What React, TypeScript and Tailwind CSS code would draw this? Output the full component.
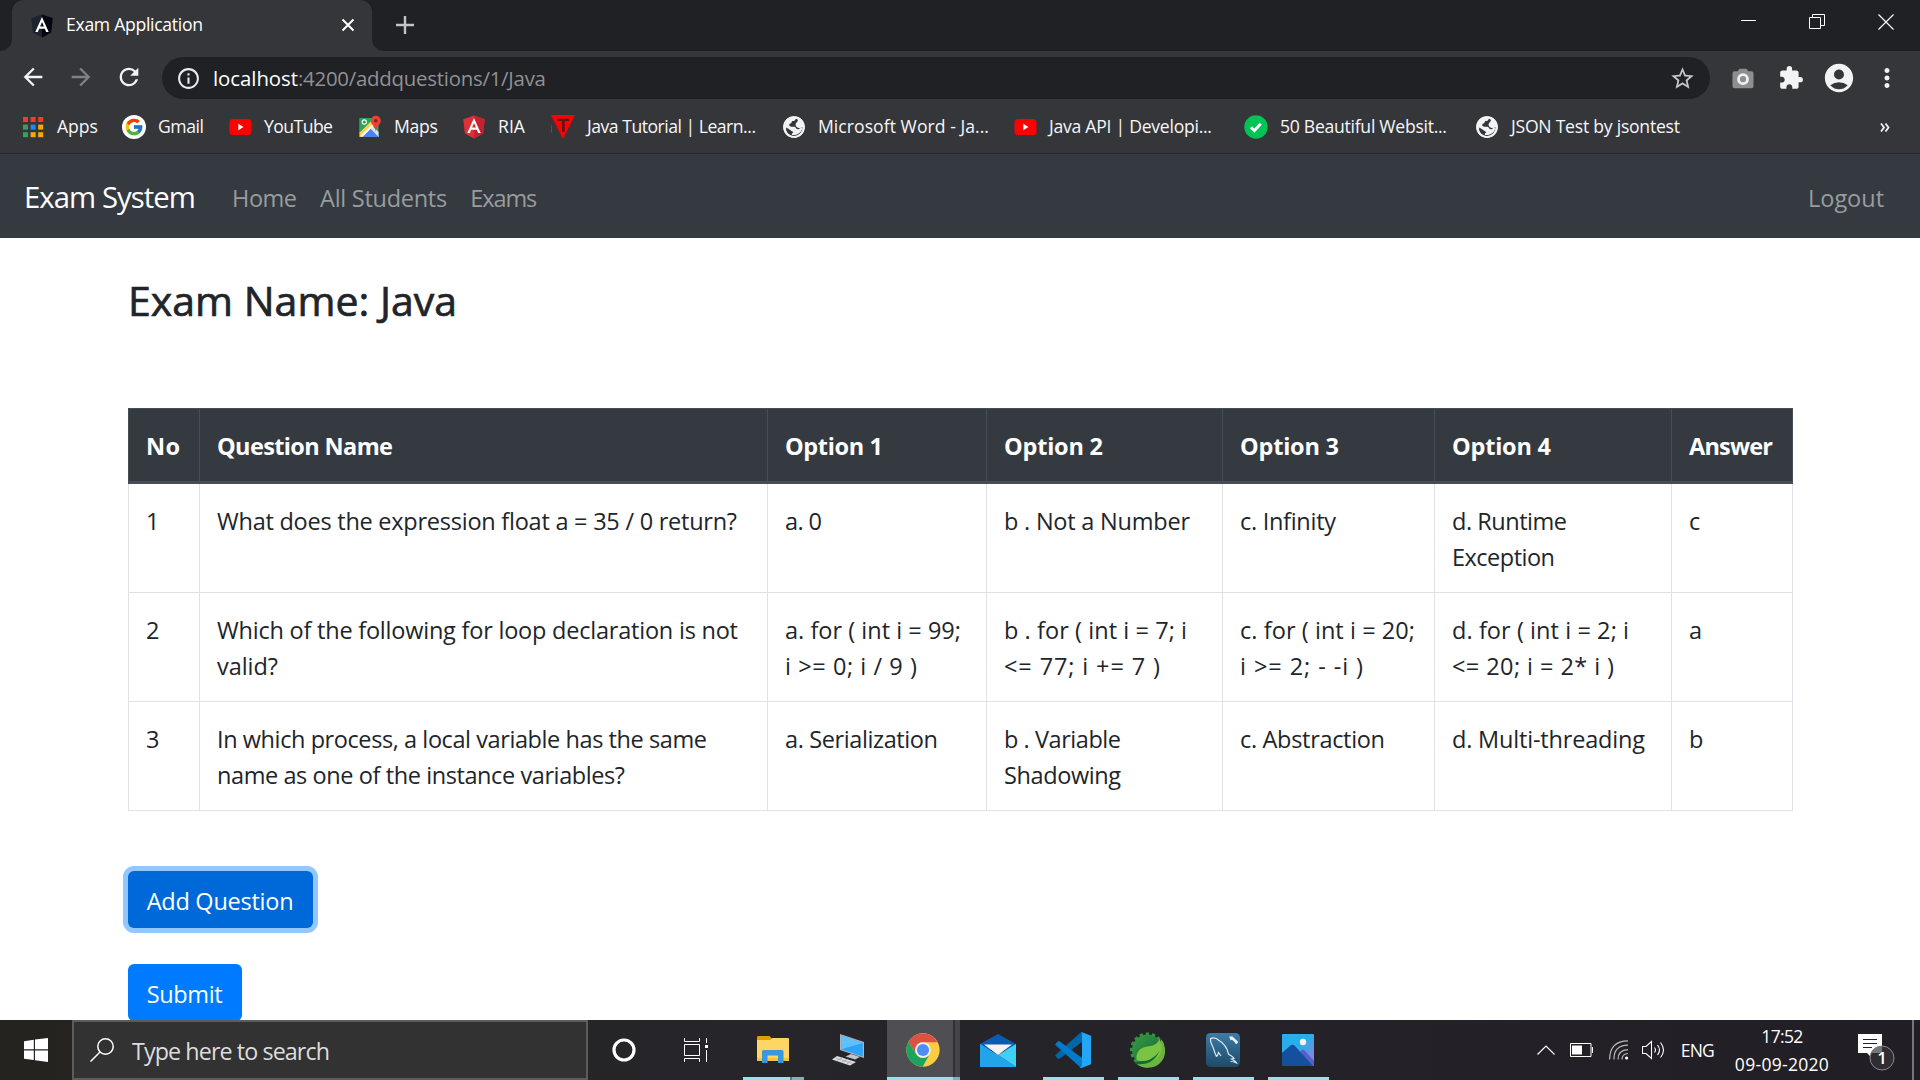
import { useLayoutEffect, useRef } from 'react';
import type { ReactNode } from 'react';
import { FcGoogle } from 'react-icons/fc';
import {
  MdArrowBack,
  MdArrowForward,
  MdRefresh,
  MdInfoOutline,
  MdStarBorder,
  MdExtension,
  MdAccountCircle,
  MdMoreVert,
} from 'react-icons/md';

/** One line of text whose tracking is adjusted so that it fills `w` pixels. */
function T({ w, children, className = '' }: { w: number; children: string; className?: string }) {
  const ref = useRef<HTMLSpanElement>(null);
  useLayoutEffect(() => {
    const el = ref.current;
    if (!el) return;
    el.style.letterSpacing = '0px';
    const natural = el.getBoundingClientRect().width;
    el.style.letterSpacing = `${(w - natural) / Math.max(1, children.length - 1)}px`;
  }, [w, children]);
  return (
    <span ref={ref} className={`inline-block whitespace-pre ${className}`}>
      {children}
    </span>
  );
}

/* ---------- small logos ---------- */

function Angular({ left, right, className }: { left: string; right: string; className: string }) {
  return (
    <svg viewBox="28 26 194 208" className={className}>
      <path fill={left} d="M125 30 31.9 63.2l14.2 123.1L125 230l78.9-43.7 14.2-123.1z" />
      <path fill={right} d="M125 30v200l78.9-43.7 14.2-123.1z" />
      <path
        fill="#fff"
        d="M125 52.1 66.8 182.6h21.7l11.7-29.2h49.4l11.7 29.2H183L125 52.1zm17 83.3h-34l17-40.9 17 40.9z"
      />
    </svg>
  );
}

function AppsGrid() {
  const rows = [
    ['#f23a2f', '#f23a2f', '#f23a2f'],
    ['#34a35a', '#1e88f5', '#fba60a'],
    ['#34a35a', '#fba60a', '#fba60a'],
  ];
  return (
    <svg viewBox="0 0 24 24" className="h-6 w-6">
      {rows.map((r, y) =>
        r.map((c, x) => <rect key={`${x}${y}`} x={2 + x * 7.6} y={2 + y * 7.6} width="5" height="5" fill={c} />),
      )}
    </svg>
  );
}

function Gmail() {
  return (
    <span className="flex h-6 w-6 items-center justify-center rounded-full bg-white">
      <FcGoogle className="h-5 w-5" />
    </span>
  );
}

function YouTube() {
  return (
    <svg viewBox="0 0 24 24" className="h-6 w-6">
      <rect x="1.500" y="4" width="22" height="16" rx="3.6" fill="#f00" />
      <path d="M10.300 8.800v6.400l5.200-3.200z" fill="#fff" />
    </svg>
  );
}

function Maps() {
  return (
    <svg viewBox="0 0 24 24" className="h-6 w-6">
      <rect x="1.5" y="3" width="19" height="19" rx="1.5" fill="#2fa35a" />
      <path d="M2 22 12 12l9 9v1z" fill="#4a84f0" />
      <path d="M1.5 17.5 16 3l4.5 1v3L4 22H1.5z" fill="#fbd24a" />
      <path d="M1.500 3h14.500L1.500 17.500z" fill="#2fa35a" />
      <path d="M14 10.500 20.500 17v5L12 13z" fill="#dde3ea" />
      <path d="M4.500 22 12.200 14l8 8z" fill="#4a84f0" />
      <path d="M2.500 20.500 14 9.500l1.500 1.500L4.500 22z" fill="#f4f6f8" />
      <circle cx="6.300" cy="7" r="2.100" fill="none" stroke="#fff" strokeWidth="1.100" />
      <path d="M17.800.8a5 5 0 0 0-5 5c0 3.700 4.100 5 5 10.800.9-5.800 5-7.100 5-10.800a5 5 0 0 0-5-5z" fill="#ea4335" />
      <circle cx="17.800" cy="5.800" r="1.800" fill="#8f2018" />
    </svg>
  );
}

function RedTriangle() {
  return (
    <svg viewBox="0 0 24 24" className="h-6 w-6">
      <path d="M0 0h24L12 24z" fill="#f00" />
      <path d="M6.500 3.800h11.500v2.200h-4.300v11h-2.600V6H6.500z" fill="#5b1417" />
      <path d="M.3 10.500v7" stroke="#6a6b6e" strokeWidth=".7" />
    </svg>
  );
}

function Globe() {
  return (
    <svg viewBox="0 0 24 24" className="h-6 w-6">
      <circle cx="12" cy="12" r="10.700" fill="#f1f3f4" />
      <path
        d="M14.200 3.400c-1 1.700-1.600 2.600-3.800 2.600-1 .2-.4 2-1.900 2.600-1.300.4-1.500 1.200-1.100 2.200 1 1.500 4.200.6 5.700 1.100 1.200.9 1 2.200 2.900 2.300 1.700.1 1.500 1.600.6 2.400-1.400 1-1.800 2.700-3.600 3.400-1.100.4-1.400-.4-1.300-1.700 0-1.600-1.500-1.900-2.500-2.600-1.500-1.200-3.300-2.400-5-3.300-.9 4.400 2.800 8.400 7 8.900 5.700.5 9.600-4.400 9.300-9.300-1.200 1.300-3.400 1.400-5 .6-1.700-.9-2.600-2.900-1.400-4.500 1-1.200 2.100-1.900 1.700-3.400z"
        fill="#35363a"
      />
      <circle cx="12" cy="12" r="9.900" fill="none" stroke="#f1f3f4" strokeWidth="1.800" />
      <path d="M9.800 19.900c-.3-1.700 1.200-2.300 2.700-3.100 1-1 1.800-2.100 3.400-2 1.600-.4 1.700-2.200 4.400-2-.3 3.500-3.600 8.100-10.500 7.100z" fill="#f1f3f4" />
    </svg>
  );
}

function GreenCheck() {
  return (
    <svg viewBox="0 0 24 24" className="h-6 w-6">
      <circle cx="12" cy="12" r="11.700" fill="#02c353" />
      <path d="m7 12.300 3.400 3.500 6.300-7.100" fill="none" stroke="#fff" strokeWidth="2.800" />
    </svg>
  );
}

/* ---------- browser chrome ---------- */

function TabStrip() {
  return (
    <div className="flex h-[51px] bg-[#202124]">
      <div className="flex w-3 items-end bg-[#35363a]">
        <div className="h-full w-3 rounded-br-xl bg-[#202124]" />
      </div>
      <div className="flex w-[360px] items-center rounded-t-xl bg-[#35363a] pl-[18px] text-[17.6px] text-white">
        <Angular left="#1d2230" right="#04060f" className="h-6 w-6" />
        <T w={137} className="mb-[3px] ml-3 leading-[48px]">Exam Application</T>
        <svg viewBox="0 0 14 14" className="mb-px ml-auto mr-[17px] h-3.5 w-3.5">
          <path d="m1.500 1.500 11 11m0-11-11 11" stroke="#fff" strokeWidth="2" />
        </svg>
      </div>
      <div className="w-3 bg-[#35363a]">
        <div className="h-full w-3 rounded-bl-xl bg-[#202124]" />
      </div>
      <svg viewBox="0 0 18 18" className="ml-3 mt-4 h-[18px] w-[18px]">
        <path d="M9 0v18M0 9h18" stroke="#c3c4c7" strokeWidth="2.400" />
      </svg>
      <div className="ml-auto mr-[26px] mt-[14px] flex h-4 gap-[53px]">
        <svg viewBox="0 0 16 16" className="h-4 w-4">
          <path d="M1 6.500h15" stroke="#fff" />
        </svg>
        <svg viewBox="0 0 16 16" className="h-4 w-4">
          <path d="M.5 3.500h11v11H.5zM3.500 3V.5h12v11h-3.500" fill="none" stroke="#fff" />
        </svg>
        <svg viewBox="0 0 16 16" className="h-4 w-4">
          <path d="m.5.500 15 15m0-15-15 15" stroke="#fff" strokeWidth="1.200" />
        </svg>
      </div>
    </div>
  );
}

function Camera() {
  return (
    <svg viewBox="0 0 24 24" className="h-6 w-6">
      <path
        d="M3.500 5.200h3.200l1.700-2.400h7.200l1.700 2.400h3.200a2 2 0 0 1 2 2v13a2 2 0 0 1-2 2h-17a2 2 0 0 1-2-2v-13a2 2 0 0 1 2-2z"
        fill="#8d8e90"
      />
      <circle cx="12" cy="13.200" r="4.500" fill="#8d8e90" stroke="#f0f0f0" strokeWidth="2.800" />
    </svg>
  );
}

function Toolbar() {
  return (
    <div className="flex h-[51px] items-center bg-[#35363a] pl-[19px]">
      <MdArrowBack className="h-7 w-7 text-[#f1f3f4]" />
      <MdArrowForward className="ml-5 h-7 w-7 text-[#808184]" />
      <MdRefresh className="ml-5 h-7 w-7 text-[#f1f3f4]" />
      <div className="ml-[19px] mt-[3px] flex h-[42px] w-[1548px] items-center rounded-full bg-[#202124] pl-[14px] pr-[14px] text-[20.4px]">
        <MdInfoOutline className="h-[25px] w-[25px] text-[#e8eaed]" />
        <T w={85} className="ml-3 leading-[40px] text-white">localhost</T>
        <T w={248} className="leading-[40px] text-[#909194]">:4200/addquestions/1/Java</T>
        <MdStarBorder className="ml-auto h-[27px] w-[27px] text-[#c5c6c8]" />
      </div>
      <div className="ml-[21px] mt-[3px] flex items-center">
        <Camera />
        <MdExtension className="ml-[23px] h-[26px] w-[26px] text-[#f1f3f4]" />
        <MdAccountCircle className="ml-[18px] h-[34px] w-[34px] text-[#f1f3f4]" />
        <MdMoreVert className="ml-[16px] h-[30px] w-[30px] text-[#f1f3f4]" />
      </div>
    </div>
  );
}

const bookmarks: { icon: ReactNode; label: string; w: number; cell: string }[] = [
  { icon: <AppsGrid />, label: 'Apps', w: 41, cell: 'w-[101px]' },
  { icon: <Gmail />, label: 'Gmail', w: 46, cell: 'w-[106px]' },
  { icon: <YouTube />, label: 'YouTube', w: 69, cell: 'w-[130px]' },
  { icon: <Maps />, label: 'Maps', w: 44, cell: 'w-[104px]' },
  {
    icon: <Angular left="#dd3136" right="#c3222e" className="h-6 w-6" />,
    label: 'RIA',
    w: 27,
    cell: 'w-[89px]',
  },
  { icon: <RedTriangle />, label: 'Java Tutorial | Learn...', w: 169, cell: 'w-[231px]' },
  { icon: <Globe />, label: 'Microsoft Word - Ja...', w: 171, cell: 'w-[231px]' },
  { icon: <YouTube />, label: 'Java API | Developi...', w: 163, cell: 'w-[231px]' },
  { icon: <GreenCheck />, label: '50 Beautiful Websit...', w: 167, cell: 'w-[231px]' },
  { icon: <Globe />, label: 'JSON Test by jsontest', w: 169, cell: 'w-[231px]' },
];

function Bookmarks() {
  return (
    <div className="flex h-[52px] items-center border-b border-[#26282c] bg-[#35363a] pb-px pl-[21px] text-[17.600px] text-[#f6f7f8]">
      {bookmarks.map((b) => (
        <div key={b.label} className={`flex shrink-0 items-center ${b.cell}`}>
          {b.icon}
          <T w={b.w} className="mb-[3px] ml-3 leading-6">{b.label}</T>
        </div>
      ))}
      <svg viewBox="0 0 10 9" className="ml-auto mr-[30px] h-[9px] w-2.5">
        <path d="m1 .5 3 4-3 4m4.500-8 3 4-3 4" fill="none" stroke="#f1f3f4" strokeWidth="1.800" />
      </svg>
    </div>
  );
}

/* ---------- exam page ---------- */

function Navbar() {
  return (
    <nav className="flex h-[84px] items-center bg-[#343a40] px-6 pt-[5px] text-[23.500px] text-[#999c9f]">
      <T w={172} className="mb-[3px] text-[29.300px] leading-[45px] text-white">Exam System</T>
      <T w={65} className="ml-[37px]">Home</T>
      <T w={127} className="ml-[23.500px]">All Students</T>
      <T w={67} className="ml-[23.500px]">Exams</T>
      <T w={76} className="ml-auto mr-3">Logout</T>
    </nav>
  );
}

type Line = [string, number];

const columns: { title: Line; width: string }[] = [
  { title: ['No', 34], width: 'w-[71px]' },
  { title: ['Question Name', 176], width: 'w-[568px]' },
  { title: ['Option 1', 98], width: 'w-[219px]' },
  { title: ['Option 2', 99], width: 'w-[236px]' },
  { title: ['Option 3', 99], width: 'w-[212px]' },
  { title: ['Option 4', 99], width: 'w-[237px]' },
  { title: ['Answer', 84], width: 'w-[121px]' },
];

const questions: Line[][][] = [
  [
    [['1', 12]],
    [['What does the expression float a = 35 / 0 return?', 520]],
    [['a. 0', 37]],
    [['b . Not a Number', 186]],
    [['c. Infinity', 96]],
    [['d. Runtime', 115], ['Exception', 103]],
    [['c', 11]],
  ],
  [
    [['2', 12]],
    [['Which of the following for loop declaration is not', 521], ['valid?', 61]],
    [['a. for ( int i = 99;', 176], ['i >= 0; i / 9 )', 132]],
    [['b . for ( int i = 7; i', 183], ['<= 77; i += 7 )', 156]],
    [['c. for ( int i = 20;', 175], ['i >= 2; - -i )', 123]],
    [['d. for ( int i = 2; i', 177], ['<= 20; i = 2* i )', 162]],
    [['a', 12]],
  ],
  [
    [['3', 12]],
    [['In which process, a local variable has the same', 490], ['name as one of the instance variables?', 408]],
    [['a. Serialization', 153]],
    [['b . Variable', 117], ['Shadowing', 117]],
    [['c. Abstraction', 145]],
    [['d. Multi-threading', 193]],
    [['b', 13]],
  ],
];

function QuestionTable() {
  return (
    <table className="w-[1665px] table-fixed border-collapse text-left align-top text-[23.500px] leading-9">
      <thead>
        <tr className="h-[74px] bg-[#343a40] text-white">
          {columns.map((c) => (
            <th
              key={c.title[0]}
              className={`border border-b-[3px] border-[#454d55] px-[17px] pt-[1px] font-bold ${c.width}`}
            >
              <T w={c.title[1]} className="align-top">{c.title[0]}</T>
            </th>
          ))}
        </tr>
      </thead>
      <tbody>
        {questions.map((row) => (
          <tr key={row[0][0][0]} className="h-[109px] first:h-[110px]">
            {row.map((lines, i) => (
              <td key={i} className="border border-[#dee2e6] px-[17px] pt-[19px] align-top">
                {lines.map(([text, w]) => (
                  <div key={text} className="h-9">
                    <T w={w} className="align-top">{text}</T>
                  </div>
                ))}
              </td>
            ))}
          </tr>
        ))}
      </tbody>
    </table>
  );
}

function ExamPage() {
  return (
    <main className="h-[782px] overflow-hidden bg-white pl-32 pt-[35px] text-[#212529]">
      <h2 className="h-[135px] text-[41px] font-medium leading-[54px] [-webkit-text-stroke:0.7px_#212529]">
        <T w={329}>Exam Name: Java</T>
      </h2>
      <QuestionTable />
      <div className="mt-[60px] flex flex-col items-start gap-9 text-[23.500px] leading-[57px] text-white">
        <button className="h-[57px] w-[185px] rounded-[6px] bg-[#0069d9] pr-px pt-[2px] shadow-[0_0_0_5px_#93c7ff]">
          <T w={147} className="align-top">Add Question</T>
        </button>
        <button className="h-[57px] w-[114px] rounded-[6px] bg-[#007bff] pr-px pt-[2px]">
          <T w={76} className="align-top">Submit</T>
        </button>
      </div>
    </main>
  );
}

/* ---------- taskbar ---------- */

function TaskView() {
  return (
    <svg viewBox="0 0 25 24" className="h-6 w-[25px]">
      <path
        d="M.5 0v3.500h15V0M.5 24v-3.500h15V24M.5 6.500h15v11H.5zM22.500 0v5m0 7v12"
        fill="none"
        stroke="#fff"
      />
      <rect x="21" y="7" width="3" height="3" fill="#fff" />
    </svg>
  );
}

function Explorer() {
  return (
    <svg viewBox="0 0 32 27" className="mr-0.5 mt-0.5 h-[27px] w-8">
      <path d="M0 1.200Q0 0 1.200 0H12.500L15 2.500V6H0z" fill="#e09c06" />
      <path d="M0 4h13l2.500-2H31q1 0 1 1v22H0z" fill="#ffd563" />
      <path d="M0 22h32v3H0z" fill="#f6bf45" />
      <path d="M5 15.500Q5 14 6.500 14h18.500q1.500 0 1.500 1.500V27h-5.500v-7.500H10.500V27H5z" fill="#3a96dd" />
    </svg>
  );
}

function RemotePc() {
  return (
    <svg viewBox="0 0 32 32" className="mr-0.5 h-8 w-8">
      <path d="m8 0 24 8v16L8 16z" fill="#a9b4bd" />
      <path d="m9.200 1.600 21.600 7.300v13.500L9.200 15.200z" fill="#2ba4f8" />
      <path d="m9.200 1.600 21.600 7.300-21.600 6.300z" fill="#62bfff" />
      <path d="m19 20 9 3-5 2.500-9.500-3z" fill="#bfc6cc" />
      <path d="m5 22 19 6-6 3.500-18-6z" fill="#dde1e5" />
      <path d="m3.500 24 17 5.500m-10-6-6 3.500m11-2-6 3.500m10-2-5 3.500" stroke="#9fa6ad" strokeWidth=".8" />
    </svg>
  );
}

function Chrome() {
  return (
    <svg viewBox="0 0 48 48" className="ml-[6px] h-[34px] w-[34px]">
      <circle cx="24" cy="24" r="23.500" fill="#fbcd42" />
      <path d="M3.600 12.300A23.500 23.500 0 0 1 44.500 13H24a11 11 0 0 0-9.600 16.500z" fill="#dd5144" />
      <path d="M3.600 12.300A23.500 23.500 0 0 0 23.500 47.500L33.500 29.500A11 11 0 0 1 14.400 29.500z" fill="#1ca261" />
      <circle cx="24" cy="24" r="11" fill="#f1f1f1" />
      <circle cx="24" cy="24" r="8.600" fill="#4f8df6" />
    </svg>
  );
}

function Mail() {
  return (
    <svg viewBox="0 0 36 33" className="mr-0.5 h-[33px] w-9">
      <path d="M0 10 18 0l18 10v6H0z" fill="#0a5cb0" />
      <path d="M0 10v23h36z" fill="#1f9ee8" />
      <path d="M36 10v23L18 21z" fill="#3fd1f5" />
      <path d="M18 21 36 33H0V10z" fill="#22a4ea" />
      <path d="M4 10.500h28L18 21z" fill="#f3f3f3" />
    </svg>
  );
}

function VsCode() {
  return (
    <svg viewBox="0 0 36 36" className="mr-0.5 h-9 w-9">
      <path d="m.6 24.200 2 2.200q1 1 2.200.1L27 10V0q-1 0-2 1L.7 22.700q-.8.800-.1 1.500z" fill="#0065a9" />
      <path d="m.6 11.800 2-2.200q1-1 2.200-.1L27 26v10q-1 0-2-1L.7 13.300q-.8-.8-.1-1.500z" fill="#007acc" />
      <path d="M26.500 0 36 3.800v28.400L26.500 36q-1 0-2-.8l2.500-1V2z" fill="#23a6f5" />
    </svg>
  );
}

function Spring() {
  return (
    <svg viewBox="0 0 36 36" className="mr-0.5 h-9 w-9">
      <defs>
        <linearGradient id="gear" x1="0" y1="0" x2="1" y2="1">
          <stop offset="0" stopColor="#3a9c45" />
          <stop offset=".6" stopColor="#1d7a3a" />
        </linearGradient>
      </defs>
      <circle cx="17.500" cy="18" r="15.500" fill="url(#gear)" />
      <circle cx="17.500" cy="18" r="16" fill="none" stroke="#33913f" strokeWidth="3" strokeDasharray="3.300 2.800" />
      <path d="M31 7c6 8 5.500 19-2 25-7 5.500-18 5-23.500-1C17 32 29 28 31 7z" fill="#6db33f" />
      <path
        d="M6.500 28C5.500 17 13 14.800 20 14c5-.5 8-3.500 9.800-7 2.700 8 2.200 13.500-1 17.500-3 3.500-7 4.500-11.800 4.300-4-.2-7.500 1.200-10.500-.8z"
        fill="#7cc344"
      />
      <path d="M5 29.800c10 1.200 19-2.800 24.500-10.800-4 10-13 14.500-24 13z" fill="#0d6b36" />
    </svg>
  );
}

function MySql() {
  return (
    <svg viewBox="0 0 34 34" className="mr-0.5 h-[34px] w-[34px]">
      <defs>
        <linearGradient id="mysql" x1="0" y1="0" x2="0" y2="1">
          <stop offset="0" stopColor="#3e7ba6" />
          <stop offset="1" stopColor="#1e4a68" />
        </linearGradient>
      </defs>
      <rect width="34" height="34" rx="4.500" fill="url(#mysql)" />
      <path
        d="M10.500 23.500c-1.500-3-2-4.500-3-8-.8-3.500-3.500-5-3-10C8 4 11 5.500 13 7.500c5.500 3 8 7 9.500 13.500 1.500 1.500 4.500 2.500 5.500 4.500l-2.500.5c2 1 4 2 5 4-2-1-4-1.500-6-1.500M10.500 23.500c1.500-1 1.500-3 2-4l2.500 3.500"
        fill="none"
        stroke="#dce9f2"
        strokeWidth="1.200"
      />
      <path d="m25 4 6 5.500" stroke="#e8f1f6" strokeWidth="2.600" />
      <path d="M24 3.500 25 6l2-1.500M29.500 10.500l2-2" stroke="#e8f1f6" strokeWidth="1.800" fill="none" />
    </svg>
  );
}

function Photos() {
  return (
    <svg viewBox="0 0 32 32" className="mr-0.5 h-8 w-8">
      <defs>
        <linearGradient id="sky" x1="0" y1="0" x2="1" y2="1">
          <stop offset=".45" stopColor="#28aeea" />
          <stop offset="1" stopColor="#a876dc" />
        </linearGradient>
      </defs>
      <rect width="32" height="32" rx="1" fill="url(#sky)" />
      <path d="m14 23 5-6q2-3 4 0l9 10v5H14z" fill="#5560c8" />
      <path d="M0 19 8.500 11.500q2-1.500 4 0L31 32H0z" fill="#14509b" />
      <circle cx="21" cy="8" r="3.200" fill="#f8f3ec" />
    </svg>
  );
}

function TaskButton({ children, active, open }: { children: ReactNode; active?: boolean; open?: boolean }) {
  return (
    <div className={`flex h-[60px] flex-col ${active ? 'w-[66px] bg-[#4f4e53]' : 'w-[61px]'}`}>
      <div className="flex h-[57px] items-center justify-center pt-[3px]">{children}</div>
      {open && <div className="h-[3px] w-full bg-[#90e5ec]" />}
    </div>
  );
}

function Tray() {
  return (
    <div className="ml-auto flex h-[60px] items-center text-[17.500px] text-white">
      <svg viewBox="0 0 18 10" className="h-2.5 w-[18px]">
        <path d="m.5 9.500 8.500-8.500 8.500 8.500" fill="none" stroke="#fff" strokeWidth="1.200" />
      </svg>
      <svg viewBox="0 0 24 14" className="ml-[15px] h-[14px] w-6">
        <path d="M.5.500h20.500v13H.5zM22.500 4v6" fill="none" stroke="#fff" />
        <rect x="2" y="2.500" width="10" height="9" fill="#fff" />
      </svg>
      <svg viewBox="0 0 20 20" className="ml-[15px] h-5 w-5">
        <path d="M.6 19.500Q.6 1 19 .8M5 19.500Q4.500 5.500 19 5.200M9 19.500Q9 10 19 9.600M13 19.500Q13 14 19 13.500" fill="none" stroke="#b7b7b7" strokeWidth="1.200" />
        <circle cx="17.600" cy="18" r="1.600" fill="#fff" />
      </svg>
      <svg viewBox="0 0 23 20" className="ml-[13px] h-5 w-[23px]">
        <path
          d="M.5 6.500h3.500L9.500 1.500v17L4 13.500H.5zM12.500 7.500q2 2.500 0 5M15.500 5q4 5 0 10M18.500 2.500q6 7.500 0 15"
          fill="none"
          stroke="#fff"
          strokeWidth="1.100"
        />
      </svg>
      <T w={34} className="ml-4">ENG</T>
      <div className="ml-[21px] flex w-[94px] flex-col items-center leading-[28px]">
        <T w={42}>17:52</T>
        <T w={94}>09-09-2020</T>
      </div>
      <svg viewBox="0 0 38 38" className="ml-[29px] mt-1.5 h-[38px] w-[38px]">
        <path d="M0 0h24v19H14v5l-5-5H0z" fill="#fff" />
        <path d="M5 5.500h14M5 9.500h14M5 13.500h9" stroke="#232126" />
        <circle cx="24" cy="24" r="12" fill="#2e2d31" stroke="#8a898d" />
        <path d="M13 19a12 12 0 0 1 11-7v7z" fill="#77767a" />
        <text x="24" y="30" fill="#fff" fontSize="17" fontWeight="600" textAnchor="middle">
          1
        </text>
      </svg>
      <div className="ml-[16px] mr-[6px] h-[60px] w-[2px] bg-[#77757a]" />
    </div>
  );
}

function Taskbar() {
  return (
    <div className="flex h-[60px] items-center bg-linear-to-r from-[#24231f] via-[#26252a] via-40% to-[#211f25]">
      <div className="flex w-[72px] justify-center">
        <svg viewBox="0 0 24 24" className="h-6 w-6">
          <path d="M0 3.200 9.800 1.800V11.300H0zM11 1.600 24 0v11.300H11zM0 12.600h9.800v9.500L0 20.800zM11 12.600h13V24l-13-1.700z" fill="#fff" />
        </svg>
      </div>
      <div className="flex h-[60px] w-[516px] items-center border-2 border-[#5c5c5c] bg-[#323232] pl-4 text-[23.300px] text-[#dcdcdc]">
        <svg viewBox="0 0 24 24" className="h-6 w-6">
          <circle cx="15.500" cy="8.500" r="7.700" fill="none" stroke="#fff" strokeWidth="1.500" />
          <path d="m10 14-9.500 9.500" stroke="#fff" strokeWidth="1.500" />
        </svg>
        <T w={198} className="ml-[18px] mt-[3px]">Type here to search</T>
      </div>
      <svg viewBox="0 0 24 24" className="ml-6 h-6 w-6">
        <circle cx="12" cy="12" r="10" fill="none" stroke="#fff" strokeWidth="3.200" />
      </svg>
      <div className="ml-12 flex">
        <TaskView />
      </div>
      <div className="ml-[34px] flex">
        <div className="flex h-[60px] w-[61px] flex-col">
          <div className="flex h-[57px] items-center justify-center">
            <Explorer />
          </div>
          <div className="flex h-[3px]">
            <div className="w-[47px] bg-[#90e5ec]" />
            <div className="w-[2px] bg-[#528085]" />
            <div className="w-3 bg-[#74b6bd]" />
          </div>
        </div>
        <div className="w-[14px]" />
        <TaskButton><RemotePc /></TaskButton>
        <div className="w-2" />
        <TaskButton active open><Chrome /></TaskButton>
        <div className="flex h-[60px] w-[7px] flex-col">
          <div className="flex grow">
            <div className="w-[2px] bg-[#323135]" />
            <div className="w-[5px] bg-[#454449]" />
          </div>
          <div className="h-[3px] bg-[#74b6bd]" />
        </div>
        <div className="ml-2 flex gap-[14px]">
          <TaskButton><Mail /></TaskButton>
          <TaskButton open><VsCode /></TaskButton>
          <TaskButton open><Spring /></TaskButton>
          <TaskButton open><MySql /></TaskButton>
          <TaskButton open><Photos /></TaskButton>
        </div>
      </div>
      <Tray />
    </div>
  );
}

export default function App() {
  return (
    <div className="h-[1080px] w-[1920px] overflow-hidden font-['Open_Sans','Noto_Sans',sans-serif]">
      <TabStrip />
      <Toolbar />
      <Bookmarks />
      <Navbar />
      <ExamPage />
      <Taskbar />
    </div>
  );
}
